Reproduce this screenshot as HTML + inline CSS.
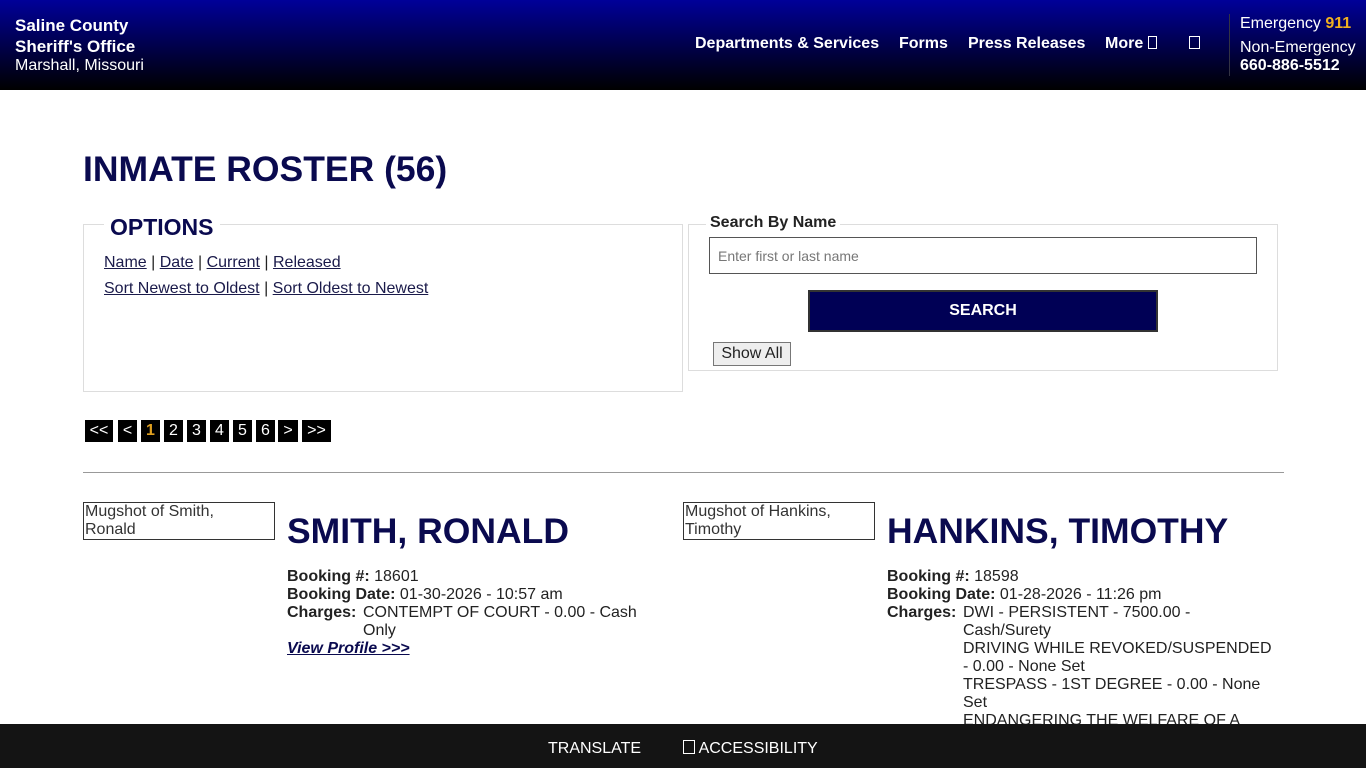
<!DOCTYPE html>
<html><head><meta charset="utf-8"><style>
*{box-sizing:border-box;margin:0;padding:0}
body{width:1366px;height:768px;overflow:hidden;font-family:"Liberation Sans",Arial,sans-serif;background:#fff;position:relative;color:#222}
.hdr{position:absolute;left:0;top:0;width:1366px;height:90px;background:linear-gradient(#000099,#000000)}
.abs{position:absolute;white-space:nowrap}
.w{color:#fff}
.nav{font-weight:bold;font-size:16px;color:#fff;top:35px}
.ico{display:inline-block;width:9px;height:13px;border:1px solid #fff;vertical-align:-1px}
a{color:#1a1a4a}
h1{position:absolute;left:83px;top:149px;font-size:35.5px;color:#0a0a4f;font-weight:bold}
.box{position:absolute;border:1px solid #ddd}
.pg{position:absolute;top:420px;height:22px;background:#000;color:#fff;font-size:16px;text-align:center;line-height:22px}
.name{position:absolute;font-size:35.5px;font-weight:bold;color:#0a0a4f;top:511px}
.det{position:absolute;font-size:16px;line-height:18px;top:568px}
.det b{display:inline-block}
.img{position:absolute;top:502px;width:192px;height:38px;border:1px solid #333;font-size:16px;line-height:18px;padding-left:1px;color:#333}
</style></head><body>
<div class="hdr"></div>
<div class="abs w" style="left:15px;top:15px;font-size:17px;font-weight:bold;line-height:21px">Saline County<br>Sheriff's Office</div>
<div class="abs w" style="left:15px;top:57px;font-size:16px">Marshall, Missouri</div>
<div class="abs nav" style="left:695px">Departments &amp; Services</div>
<div class="abs nav" style="left:899px">Forms</div>
<div class="abs nav" style="left:968px">Press Releases</div>
<div class="abs nav" style="left:1105px">More <span class="ico"></span></div>
<div class="abs nav" style="left:1189px"><span class="ico" style="width:11px"></span></div>
<div class="abs" style="left:1229px;top:14px;width:1px;height:62px;background:#334"></div>
<div class="abs w" style="left:1240px;top:15px;font-size:16px">Emergency <b style="color:#f0b020">911</b></div>
<div class="abs w" style="left:1240px;top:39px;font-size:16px">Non-Emergency</div>
<div class="abs w" style="left:1240px;top:57px;font-size:16px;font-weight:bold">660-886-5512</div>
<h1>INMATE ROSTER (56)</h1>
<div class="box" style="left:83px;top:224px;width:600px;height:168px"></div>
<div class="abs" style="left:104px;top:214px;background:#fff;padding:0 6px;font-size:23px;font-weight:bold;color:#0a0a4f">OPTIONS</div>
<div class="abs" style="left:104px;top:250px;font-size:16px;line-height:26px"><a href="#">Name</a> | <a href="#">Date</a> | <a href="#">Current</a> | <a href="#">Released</a><br><a href="#">Sort Newest to Oldest</a> | <a href="#">Sort Oldest to Newest</a></div>
<div class="box" style="left:688px;top:224px;width:590px;height:147px"></div>
<div class="abs" style="left:706px;top:214px;background:#fff;padding:0 4px;font-size:16px;font-weight:bold">Search By Name</div>
<div class="abs" style="left:709px;top:237px;width:548px;height:37px;border:1px solid #555;font-size:14px;color:#777;padding:10px 8px">Enter first or last name</div>
<div class="abs" style="left:808px;top:290px;width:350px;height:42px;background:#000055;border:2px solid #333;color:#fff;font-weight:bold;font-size:16px;text-align:center;line-height:38px">SEARCH</div>
<div class="abs" style="left:713px;top:342px;width:78px;height:24px;border:1px solid #777;background:#eee;font-size:16px;text-align:center;line-height:22px">Show All</div>
<div class="pg" style="left:85px;width:28px">&lt;&lt;</div>
<div class="pg" style="left:118px;width:19px">&lt;</div>
<div class="pg" style="left:141px;width:19px;color:#e0a020;font-weight:bold">1</div>
<div class="pg" style="left:164px;width:19px">2</div>
<div class="pg" style="left:187px;width:19px">3</div>
<div class="pg" style="left:210px;width:19px">4</div>
<div class="pg" style="left:233px;width:19px">5</div>
<div class="pg" style="left:256px;width:19px">6</div>
<div class="pg" style="left:278px;width:20px">&gt;</div>
<div class="pg" style="left:302px;width:29px">&gt;&gt;</div>
<div class="abs" style="left:83px;top:472px;width:1201px;height:1px;background:#999"></div>
<div class="img" style="left:83px">Mugshot of Smith,<br>Ronald</div>
<div class="name" style="left:287px">SMITH, RONALD</div>
<div class="det" style="left:287px;width:360px"><b>Booking #:</b> 18601<br><b>Booking Date:</b> 01-30-2026 - 10:57 am<br><div style="display:flex"><b style="width:76px;flex:none">Charges:</b><span>CONTEMPT OF COURT - 0.00 - Cash Only</span></div><a href="#" style="font-weight:bold;font-style:italic;color:#0a0a4f">View Profile &gt;&gt;&gt;</a></div>
<div class="img" style="left:683px">Mugshot of Hankins,<br>Timothy</div>
<div class="name" style="left:887px">HANKINS, TIMOTHY</div>
<div class="det" style="left:887px;width:390px"><b>Booking #:</b> 18598<br><b>Booking Date:</b> 01-28-2026 - 11:26 pm<br><div style="display:flex"><b style="width:76px;flex:none">Charges:</b><span>DWI - PERSISTENT - 7500.00 - Cash/Surety<br>DRIVING WHILE REVOKED/SUSPENDED - 0.00 - None Set<br>TRESPASS - 1ST DEGREE - 0.00 - None Set<br>ENDANGERING THE WELFARE OF A</span></div></div>
<div class="abs" style="left:0;top:724px;width:1366px;height:44px;background:#141414"></div>
<div class="abs" style="left:548px;top:740px;color:#fff;font-size:16px">TRANSLATE</div>
<div class="abs" style="left:683px;top:740px;color:#fff;font-size:16px"><span class="ico" style="width:12px;height:14px"></span> ACCESSIBILITY</div>
</body></html>
